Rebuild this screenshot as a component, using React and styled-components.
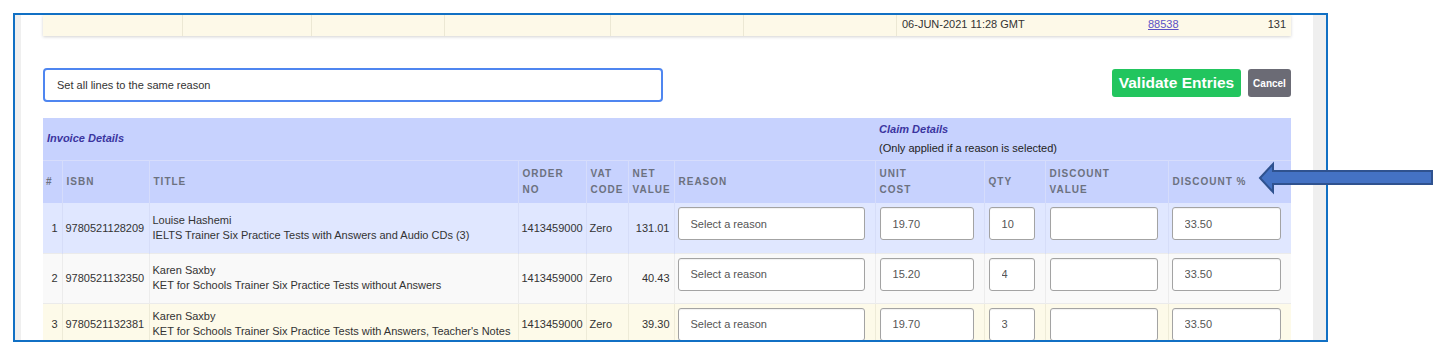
import React from 'react';
import styled, { createGlobalStyle } from 'styled-components';

const Global = createGlobalStyle`
  html, body { margin: 0; padding: 0; background: #fff; }
  body { font-family: "Liberation Sans", Arial, sans-serif; }
  * { box-sizing: border-box; }
`;

const Page = styled.div`
  position: relative;
  width: 1438px;
  height: 354px;
  padding: 13px 0 0 13px;
  overflow: hidden;
`;

const Frame = styled.div`
  width: 1315px;
  height: 329px;
  border: 2px solid #1170c4;
  display: flex;
  overflow: hidden;
`;

const Gutter = styled.div`
  flex: none;
  width: ${p => p.$w}px;
  background: #efefef;
`;

const Content = styled.div`
  flex: 1;
  min-width: 0;
  background: #fff;
  padding: 0 22px;
`;

const SummaryRow = styled.div`
  display: grid;
  grid-template-columns: 140px 129px 133px 166px 133px 153px 245px 1fr 60px;
  height: 21px;
  background: #fdf9e8;
  box-shadow: 0 1px 3px rgba(0, 0, 0, 0.18);
  font-size: 11px;
  color: #333;
`;

const SummaryCell = styled.div`
  display: flex;
  align-items: center;
  justify-content: ${p => (p.$right ? 'flex-end' : 'flex-start')};
  padding: 0 5px 3px 5px;
  border-right: ${p => (p.$divider ? '1px solid #ece8d4' : 'none')};
`;

const Link = styled.a`
  color: #5b52c6;
  text-decoration: underline;
  padding-left: 1px;
`;

const Toolbar = styled.div`
  display: flex;
  align-items: flex-start;
  margin-top: 32px;
`;

const SetAll = styled.input`
  width: 620px;
  height: 34px;
  border: 2px solid #4f86f0;
  border-radius: 4px;
  padding: 0 12px;
  font-family: "Liberation Sans", Arial, sans-serif;
  font-size: 11px;
  color: #333;
  outline: none;
  &::placeholder { color: #333; }
`;

const Spacer = styled.div`
  flex: 1;
`;

const Button = styled.button`
  margin-top: 1px;
  height: 28px;
  border: none;
  border-radius: 3px;
  color: #fff;
  font-family: "Liberation Sans", Arial, sans-serif;
  font-weight: bold;
  padding: 0;
  width: ${p => p.$w}px;
  background: ${p => p.$bg};
  font-size: ${p => p.$size}px;
  letter-spacing: ${p => p.$ls}px;
  margin-left: ${p => p.$ml || 0}px;
`;

const Table = styled.table`
  margin-top: 16px;
  width: 1248px;
  border-collapse: collapse;
  table-layout: fixed;
  font-size: 11px;
  color: #333;
`;

const GroupRow = styled.tr`
  height: 42px;
  background: #c7d2fe;
  border-bottom: 1px solid #d7ddfb;
`;

const GroupCell = styled.th`
  text-align: left;
  vertical-align: middle;
  font-weight: normal;
  padding: 0 4px;
`;

const GroupTitle = styled.div`
  font-weight: bold;
  font-style: italic;
  color: #3b35a0;
  line-height: 19px;
`;

const GroupNote = styled.div`
  color: #222;
  line-height: 19px;
`;

const HeadRow = styled.tr`
  height: 43px;
  background: #c7d2fe;
`;

const Th = styled.th`
  text-align: left;
  vertical-align: middle;
  padding: 0 4px;
  font-size: 10px;
  font-weight: bold;
  letter-spacing: 1px;
  line-height: 16px;
  color: #6c7180;
  border-left: 1px solid #d5dcfb;
  &:first-child { border-left: none; padding-left: 3px; }
`;

const Row = styled.tr`
  height: ${p => p.$h}px;
  background: ${p => p.$bg};
  border-bottom: 1px solid #ebebeb;
`;

const Td = styled.td`
  padding: 0 ${p => (p.$right ? 4 : 3)}px 0 3px;
  vertical-align: middle;
  text-align: ${p => (p.$right ? 'right' : 'left')};
  white-space: nowrap;
  border-left: 1px solid ${p => p.$line};
  &:first-child { border-left: none; }
`;

const TitleCell = styled(Td)`
  line-height: 15px;
  white-space: nowrap;
`;

const InputCell = styled.td`
  padding: 4px 10px 0 ${p => p.$pl || 4}px;
  vertical-align: top;
  border-left: 1px solid ${p => p.$line};
`;

const Field = styled.input`
  display: block;
  width: 100%;
  height: 33px;
  border: 1px solid #a3a3a3;
  border-radius: 3px;
  background: #fff;
  padding: 0 12px;
  font-family: "Liberation Sans", Arial, sans-serif;
  font-size: 11px;
  color: #555;
  outline: none;
  box-shadow: inset 0 1px 1px rgba(0, 0, 0, 0.06);
  &::placeholder { color: #555; }
`;

const Arrow = styled.svg`
  position: absolute;
  left: 1256px;
  top: 160px;
`;

const rows = [
  {
    n: 1, isbn: '9780521128209', author: 'Louise Hashemi',
    title: 'IELTS Trainer Six Practice Tests with Answers and Audio CDs (3)',
    order: '1413459000', vat: 'Zero', net: '131.01', cost: '19.70', qty: '10', pct: '33.50',
    bg: '#e0e7ff', line: '#d6ddf8', h: 50,
  },
  {
    n: 2, isbn: '9780521132350', author: 'Karen Saxby',
    title: 'KET for Schools Trainer Six Practice Tests without Answers',
    order: '1413459000', vat: 'Zero', net: '40.43', cost: '15.20', qty: '4', pct: '33.50',
    bg: '#f9f9f9', line: '#ececec', h: 50,
  },
  {
    n: 3, isbn: '9780521132381', author: 'Karen Saxby',
    title: "KET for Schools Trainer Six Practice Tests with Answers, Teacher's Notes",
    order: '1413459000', vat: 'Zero', net: '39.30', cost: '19.70', qty: '3', pct: '33.50',
    bg: '#fdfae9', line: '#eeebd8', h: 42,
  },
];

const widths = [19, 87, 369, 68, 42, 46, 201, 109, 61, 123, 123];

export default function App() {
  return (
    <Page>
      <Global />
      <Frame>
        <Gutter $w={6} />
        <Content>
          <SummaryRow>
            <SummaryCell $divider />
            <SummaryCell $divider />
            <SummaryCell $divider />
            <SummaryCell $divider />
            <SummaryCell $divider />
            <SummaryCell $divider />
            <SummaryCell>06-JUN-2021 11:28 GMT</SummaryCell>
            <SummaryCell><Link href="#">88538</Link></SummaryCell>
            <SummaryCell $right>131</SummaryCell>
          </SummaryRow>

          <Toolbar>
            <SetAll placeholder="Set all lines to the same reason" />
            <Spacer />
            <Button $w={129} $bg="#22c55e" $size={15.5} $ls={0}>Validate Entries</Button>
            <Button $w={43} $bg="#6b6b75" $size={10} $ls={0} $ml={7}>Cancel</Button>
          </Toolbar>

          <Table>
            <colgroup>
              {widths.map((w, i) => <col key={i} style={{ width: w }} />)}
            </colgroup>
            <thead>
              <GroupRow>
                <GroupCell colSpan={7}>
                  <GroupTitle>Invoice Details</GroupTitle>
                </GroupCell>
                <GroupCell colSpan={4}>
                  <GroupTitle>Claim Details</GroupTitle>
                  <GroupNote>(Only applied if a reason is selected)</GroupNote>
                </GroupCell>
              </GroupRow>
              <HeadRow>
                <Th>#</Th>
                <Th>ISBN</Th>
                <Th>TITLE</Th>
                <Th>ORDER<br />NO</Th>
                <Th>VAT<br />CODE</Th>
                <Th>NET<br />VALUE</Th>
                <Th>REASON</Th>
                <Th>UNIT<br />COST</Th>
                <Th>QTY</Th>
                <Th>DISCOUNT<br />VALUE</Th>
                <Th>DISCOUNT %</Th>
              </HeadRow>
            </thead>
            <tbody>
              {rows.map(r => (
                <Row key={r.n} $bg={r.bg} $h={r.h}>
                  <Td $right $line={r.line}>{r.n}</Td>
                  <Td $line={r.line}>{r.isbn}</Td>
                  <TitleCell $line={r.line}>
                    {r.author}<br />{r.title}
                  </TitleCell>
                  <Td $line={r.line}>{r.order}</Td>
                  <Td $line={r.line}>{r.vat}</Td>
                  <Td $right $line={r.line}>{r.net}</Td>
                  <InputCell $line={r.line} $pl={3}><Field placeholder="Select a reason" readOnly /></InputCell>
                  <InputCell $line={r.line}><Field defaultValue={r.cost} /></InputCell>
                  <InputCell $line={r.line}><Field defaultValue={r.qty} /></InputCell>
                  <InputCell $line={r.line}><Field /></InputCell>
                  <InputCell $line={r.line} $pl={3}><Field defaultValue={r.pct} /></InputCell>
                </Row>
              ))}
            </tbody>
          </Table>
        </Content>
        <Gutter $w={13} />
      </Frame>

      <Arrow width="180" height="36" viewBox="0 0 180 36">
        <polygon
          points="4,18 17,4 17,11 176,11 176,24 17,24 17,32"
          fill="#4472c4"
          stroke="#2f528f"
          strokeWidth="2"
          strokeLinejoin="miter"
        />
      </Arrow>
    </Page>
  );
}
